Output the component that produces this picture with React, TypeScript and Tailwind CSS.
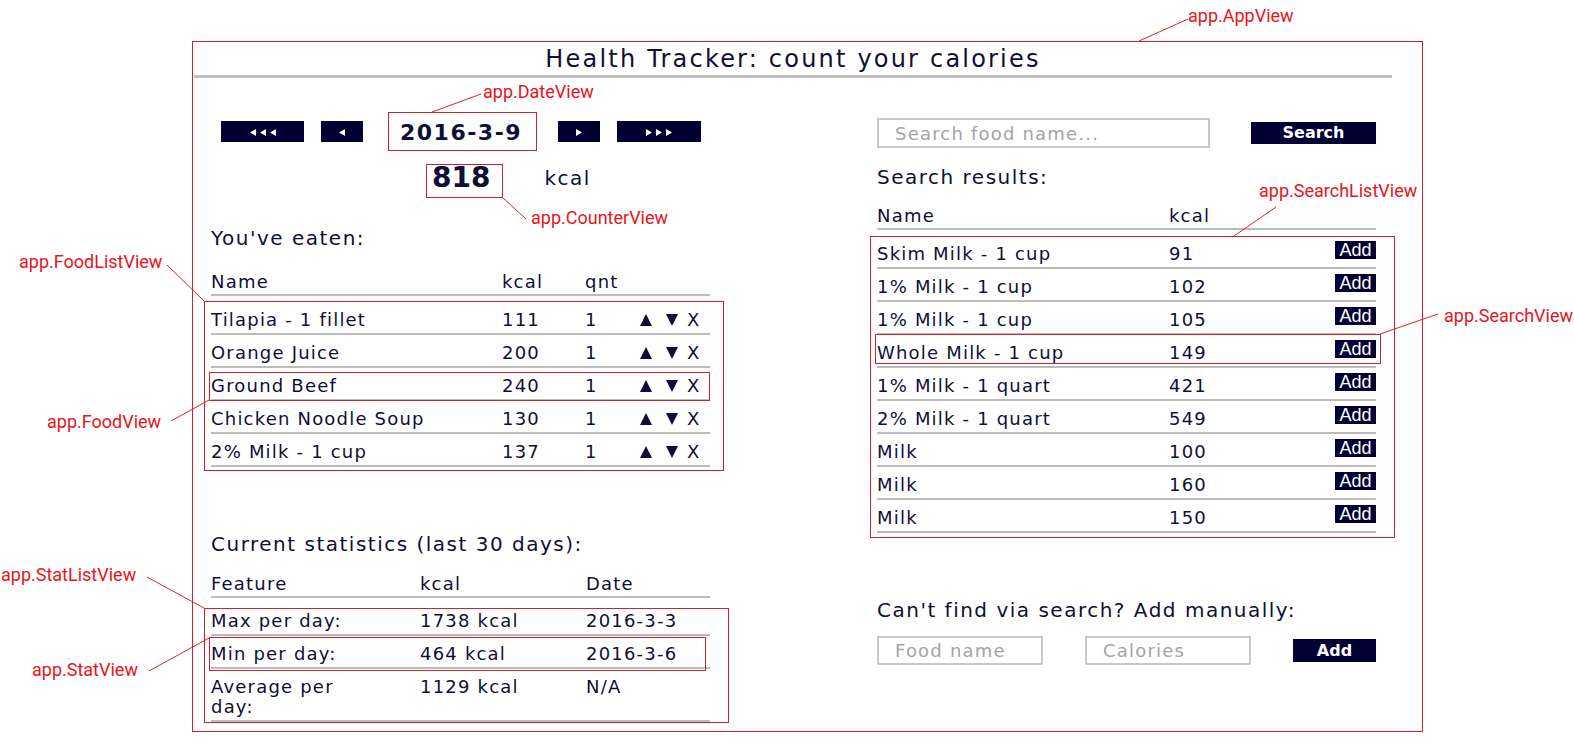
import React from "react";

const eaten = [
  { name: "Tilapia - 1 fillet", kcal: 111, qnt: 1 },
  { name: "Orange Juice", kcal: 200, qnt: 1 },
  { name: "Ground Beef", kcal: 240, qnt: 1 },
  { name: "Chicken Noodle Soup", kcal: 130, qnt: 1 },
  { name: "2% Milk - 1 cup", kcal: 137, qnt: 1 },
];

const results = [
  { name: "Skim Milk - 1 cup", kcal: 91 },
  { name: "1% Milk - 1 cup", kcal: 102 },
  { name: "1% Milk - 1 cup", kcal: 105 },
  { name: "Whole Milk - 1 cup", kcal: 149 },
  { name: "1% Milk - 1 quart", kcal: 421 },
  { name: "2% Milk - 1 quart", kcal: 549 },
  { name: "Milk", kcal: 100 },
  { name: "Milk", kcal: 160 },
  { name: "Milk", kcal: 150 },
];

const stats = [
  { feature: "Max per day:", kcal: "1738 kcal", date: "2016-3-3" },
  { feature: "Min per day:", kcal: "464 kcal", date: "2016-3-6" },
  { feature: "Average per day:", kcal: "1129 kcal", date: "N/A" },
];

// annotation overlay data (the red boxes drawn over the app)
const boxes = [
  [388, 112, 148, 38],
  [426, 164, 76, 33],
  [204, 301, 519, 169],
  [209, 372, 500, 28],
  [870, 236, 524, 301],
  [875, 334, 505, 29],
  [204, 608, 524, 114],
  [209, 637, 496, 33],
];

const leaders = [
  [1139, 41, 1188, 19],
  [432, 112, 481, 94],
  [502, 197, 526, 219],
  [167, 265, 204, 301],
  [171, 421, 209, 400],
  [1234, 236, 1276, 207],
  [1380, 334, 1438, 314],
  [147, 577, 204, 608],
  [149, 671, 209, 638],
];

const labels = [
  { text: "app.AppView", x: 1188, y: 16 },
  { text: "app.DateView", x: 483, y: 92 },
  { text: "app.CounterView", x: 531, y: 218 },
  { text: "app.FoodListView", x: 19, y: 262 },
  { text: "app.FoodView", x: 47, y: 422 },
  { text: "app.SearchListView", x: 1259, y: 191 },
  { text: "app.SearchView", x: 1444, y: 316 },
  { text: "app.StatListView", x: 1, y: 575 },
  { text: "app.StatView", x: 32, y: 670 },
];

const Arrows = ({ n, dir }: { n: number; dir: "l" | "r" }) => {
  const w = n * 6 + (n - 1) * 4;
  return (
    <svg width={w} height={7} viewBox={`0 0 ${w} 7`} className="translate-y-[1px]">
      {Array.from({ length: n }).map((_, i) => {
        const x = i * 10;
        const pts = dir === "l" ? `${x + 6},0 ${x + 6},7 ${x},3.5` : `${x},0 ${x},7 ${x + 6},3.5`;
        return <polygon key={i} points={pts} fill="#ffffff" />;
      })}
    </svg>
  );
};

const Tri = ({ up }: { up?: boolean }) => (
  <svg width={12} height={12} viewBox="0 0 12 12">
    <polygon points={up ? "6,0 12,12 0,12" : "0,0 12,0 6,12"} fill="#0f0f35" />
  </svg>
);

const headRow = "flex border-b-2 border-[#bcbcbc] pt-[10px] pb-[2px] leading-[20px]";
const bodyRow = "flex border-b-2 border-[#bcbcbc] pt-[8px] pb-[3px] leading-[20px]";

export default function App() {
  return (
    <div className="relative w-[1574px] h-[744px] bg-white overflow-hidden font-['DejaVu_Sans',sans-serif] text-[#0f0f35] text-[18px] tracking-[1.2px]">
      <div className="pt-[41px] pl-[192px]">
        <div className="w-[1231px] h-[691px] border border-[#d4202c]">
          <div className="ml-[1px] w-[1198px] pt-[2px] pb-[1px] border-b-[3px] border-[#bfbfbf] text-center text-[24px] leading-[30px] tracking-[2.2px]">
            Health Tracker: count your calories
          </div>

          <div className="flex">
            {/* left column */}
            <div className="ml-[18px] w-[499px]">
              <div className="mt-[43px] h-[21px] flex items-center">
                <button className="ml-[10px] w-[83px] h-[21px] bg-[#000033] flex items-center justify-center">
                  <Arrows n={3} dir="l" />
                </button>
                <button className="ml-[17px] w-[42px] h-[21px] bg-[#000033] flex items-center justify-center">
                  <Arrows n={1} dir="l" />
                </button>
                <span className="ml-[37px] w-[121px] text-[22px] font-bold leading-[21px] tracking-[1.5px] translate-y-[1px] whitespace-nowrap">
                  2016-3-9
                </span>
                <button className="ml-[37px] w-[42px] h-[21px] bg-[#000033] flex items-center justify-center">
                  <Arrows n={1} dir="r" />
                </button>
                <button className="ml-[17px] w-[84px] h-[21px] bg-[#000033] flex items-center justify-center">
                  <Arrows n={3} dir="r" />
                </button>
              </div>

              <div className="mt-[20px] h-[32px] flex items-center">
                <span className="ml-[221px] text-[28px] font-bold leading-[32px] tracking-normal">818</span>
                <span className="ml-[54px] text-[20px] tracking-[1.5px] leading-[24px]">kcal</span>
              </div>

              <div className="mt-[32px] text-[20px] leading-[24px] tracking-[1.5px]">You've eaten:</div>

              <div className={`mt-[12px] ${headRow}`}>
                <div className="w-[291px]">Name</div>
                <div className="w-[83px]">kcal</div>
                <div>qnt</div>
              </div>
              <div className="mt-[6px]">
                {eaten.map((f, i) => (
                  <div key={i} className={bodyRow}>
                    <div className="w-[291px]">{f.name}</div>
                    <div className="w-[83px]">{f.kcal}</div>
                    <div className="w-[54px]">{f.qnt}</div>
                    <div className="flex items-center h-[20px]">
                      <span className="ml-[1px]"><Tri up /></span>
                      <span className="ml-[14px]"><Tri /></span>
                      <span className="ml-[9px] tracking-normal">X</span>
                    </div>
                  </div>
                ))}
              </div>

              <div className="mt-[65px] text-[20px] leading-[24px] tracking-[1.5px]">Current statistics (last 30 days):</div>

              <div className={`mt-[8px] ${headRow}`}>
                <div className="w-[209px]">Feature</div>
                <div className="w-[166px]">kcal</div>
                <div>Date</div>
              </div>
              <div className="mt-[5px]">
                {stats.map((s, i) => (
                  <div key={i} className={bodyRow}>
                    <div className="w-[209px] pr-[52px]">{s.feature}</div>
                    <div className="w-[166px]">{s.kcal}</div>
                    <div>{s.date}</div>
                  </div>
                ))}
              </div>
            </div>

            {/* right column */}
            <div className="ml-[167px] w-[499px]">
              <div className="mt-[40px] flex items-center justify-between">
                <input
                  placeholder="Search food name..."
                  className="w-[333px] h-[30px] border-2 border-[#c8c8c8] pl-[16px] text-[18px] placeholder:text-[#a4a4a4] outline-none"
                />
                <button className="w-[125px] h-[22px] bg-[#000033] text-white text-[16px] font-bold leading-[22px] tracking-normal">
                  Search
                </button>
              </div>

              <div className="mt-[17px] text-[20px] leading-[24px] tracking-[1.5px]">Search results:</div>

              <div className={`mt-[7px] ${headRow}`}>
                <div className="w-[292px]">Name</div>
                <div>kcal</div>
              </div>
              <div className="mt-[6px]">
                {results.map((r, i) => (
                  <div key={i} className="flex items-start h-[33px] border-b-2 border-[#bcbcbc] leading-[20px]">
                    <div className="w-[292px] pt-[8px]">{r.name}</div>
                    <div className="pt-[8px]">{r.kcal}</div>
                    <button className="ml-auto mt-[5px] w-[41px] h-[18px] bg-[#000033] text-white text-[18px] leading-[18px] tracking-normal font-['Liberation_Sans',sans-serif]">
                      Add
                    </button>
                  </div>
                ))}
              </div>

              <div className="mt-[65px] text-[20px] leading-[24px] tracking-[1.5px]">Can't find via search? Add manually:</div>

              <div className="mt-[14px] flex items-center">
                <input
                  placeholder="Food name"
                  className="w-[166px] h-[29px] border-2 border-[#c8c8c8] pl-[16px] text-[18px] placeholder:text-[#a4a4a4] outline-none"
                />
                <input
                  placeholder="Calories"
                  className="ml-[42px] w-[166px] h-[29px] border-2 border-[#c8c8c8] pl-[16px] text-[18px] placeholder:text-[#a4a4a4] outline-none"
                />
                <button className="ml-[42px] w-[83px] h-[23px] bg-[#000033] text-white text-[16px] font-bold leading-[23px] tracking-normal">
                  Add
                </button>
              </div>
            </div>
          </div>
        </div>
      </div>

      {/* annotation overlay */}
      <div className="absolute inset-0 pointer-events-none">
        <svg width={1574} height={744} className="absolute inset-0">
          {boxes.map(([x, y, w, h], i) => (
            <rect key={i} x={x + 0.5} y={y + 0.5} width={w} height={h} fill="none" stroke="#d4202c" strokeWidth={1} />
          ))}
          {leaders.map(([x1, y1, x2, y2], i) => (
            <line key={i} x1={x1} y1={y1} x2={x2} y2={y2} stroke="#e0202a" strokeWidth={1} />
          ))}
        </svg>
        {labels.map((l, i) => (
          <div
            key={i}
            className="absolute text-[18px] leading-[20px] tracking-normal text-[#e8141c] font-['Roboto',sans-serif] whitespace-nowrap"
            style={{ left: l.x, top: l.y - 10 }}
          >
            {l.text}
          </div>
        ))}
      </div>
    </div>
  );
}
